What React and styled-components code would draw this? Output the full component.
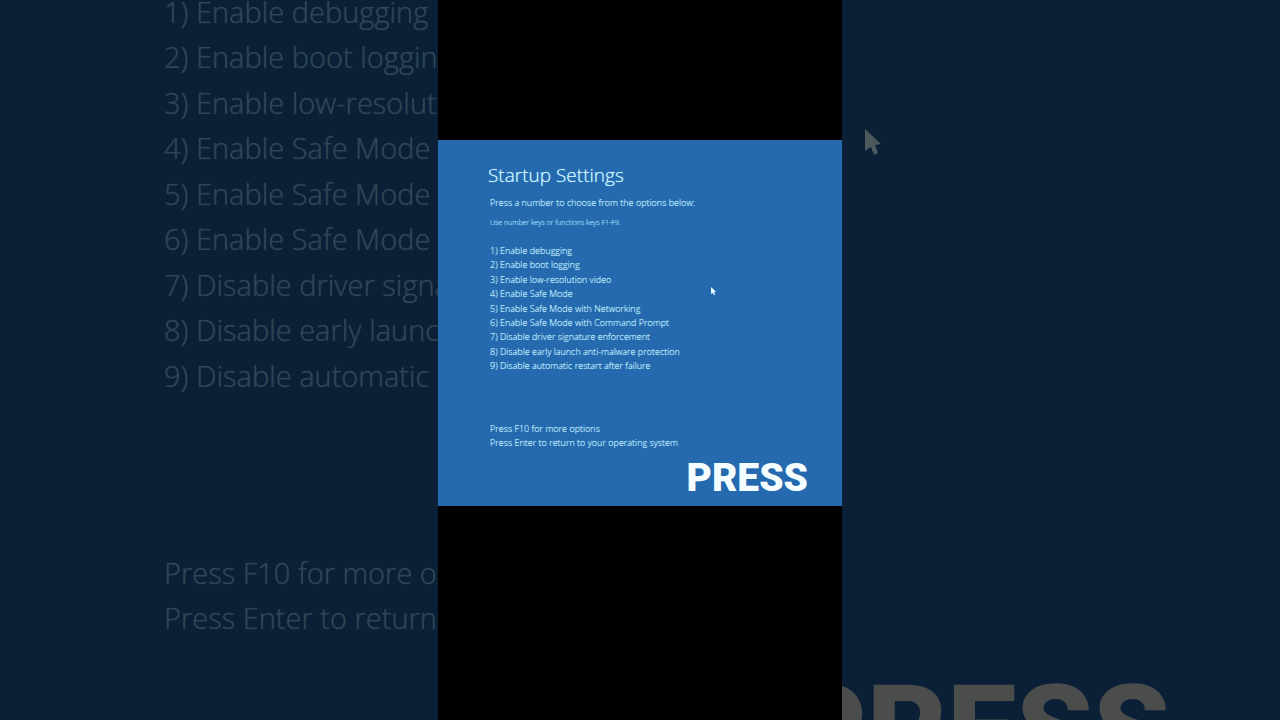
import React from 'react';
import styled, { createGlobalStyle } from "styled-components";

const options = [
  "Enable debugging",
  "Enable boot logging",
  "Enable low-resolution video",
  "Enable Safe Mode",
  "Enable Safe Mode with Networking",
  "Enable Safe Mode with Command Prompt",
  "Disable driver signature enforcement",
  "Disable early launch anti-malware protection",
  "Disable automatic restart after failure",
];

const hints = [
  "Press F10 for more options",
  "Press Enter to return to your operating system",
];

const GlobalStyle = createGlobalStyle`
  * {
    box-sizing: border-box;
  }
  body {
    margin: 0;
    background: #000;
    font-family: "Open Sans", "Noto Sans", sans-serif;
    font-weight: 300;
  }
`;

const Stage = styled.main`
  display: grid;
  grid-template-columns: 1fr auto 1fr;
  height: 100vh;
  overflow: hidden;
`;

const Side = styled.div`
  position: relative;
  display: flex;
  flex-direction: column;
  min-width: 0;
  overflow: hidden;
  background: #0b2036;
  color: #2d4555;
  text-shadow: 0 0 1px #2d4555;
`;

const LeftSide = styled(Side)`
  padding-left: 164px;
`;

const RightSide = styled(Side)`
  justify-content: flex-end;
  align-items: flex-end;
  padding-right: 110px;
`;

const Phone = styled.div`
  height: 100vh;
  aspect-ratio: 101 / 180;
  padding-top: 140px;
  background: #000;
`;

const Screen = styled.section`
  position: relative;
  display: flex;
  flex-direction: column;
  padding: 20px 34px 8px 52px;
  background: #2569ae;
  color: #d0f8ff;
  text-shadow: 0 0 1px #8fd0f4;
`;

const Title = styled.h1`
  margin: 0 0 0 -2px;
  font-size: 19px;
  font-weight: 300;
  line-height: 30px;
  color: #d4faff;
`;

const Lead = styled.p`
  margin: 6px 0 0;
  font-size: 9px;
  line-height: 14px;
`;

const Note = styled.p`
  margin: 7px 0 0;
  font-size: 7px;
  line-height: 12px;
  color: #a8e0fa;
`;

const Lines = styled.ul`
  margin: ${props => props.$top}px 0 0;
  padding: 0;
  list-style: none;
  white-space: nowrap;
  font-size: ${props => props.$large ? 29 : 9}px;
  line-height: ${props => props.$large ? 1.567 : 1.6};
`;

const Caption = styled.strong`
  align-self: flex-end;
  font-family: Roboto, sans-serif;
  font-weight: 900;
  font-size: ${props => props.$large ? 123 : 39}px;
  line-height: 1;
  color: ${props => props.$large ? "#4b4d4c" : "#f4fdff"};
  text-shadow: none;
`;

const SmallCaption = styled(Caption)`
  margin-top: 9px;
`;

const LargeCaption = styled(Caption)`
  margin-bottom: -72px;
`;

// the mouse pointer floats over whatever is beneath it
const Pointer = styled.svg`
  position: absolute;
  left: ${props => props.$x}px;
  top: ${props => props.$y}px;
  width: ${props => props.$size}px;
  height: auto;
`;

const Cursor = ({ x, y, size, color }) => (
  <Pointer $x={x} $y={y} $size={size} viewBox="0 0 16 26" aria-hidden="true">
    <path d="M0 0 L16 15 L10 16 L13 24 L9 26 L6 18 L0 22 Z" fill={color} />
  </Pointer>
);

const OptionLines = props => (
  <Lines {...props}>
    {options.map((option, i) => (
      <li key={option}>{i + 1}) {option}</li>
    ))}
  </Lines>
);

const HintLines = props => (
  <Lines {...props}>
    {hints.map(hint => <li key={hint}>{hint}</li>)}
  </Lines>
);

const App = () => {
  return (
    <Stage>
      <GlobalStyle />
      <LeftSide aria-hidden="true">
        <OptionLines $large $top={-11} />
        <HintLines $large $top={152} />
      </LeftSide>
      <Phone>
        <Screen>
          <Title>Startup Settings</Title>
          <Lead>Press a number to choose from the options below:</Lead>
          <Note>Use number keys or functions keys F1-F9.</Note>
          <OptionLines $top={15} />
          <HintLines $top={48} />
          <SmallCaption>PRESS</SmallCaption>
          <Cursor x={273} y={147} size={5} color="#e4faff" />
        </Screen>
      </Phone>
      <RightSide aria-hidden="true">
        <Cursor x={23} y={129} size={16} color="#4c5a5c" />
        <LargeCaption $large>PRESS</LargeCaption>
      </RightSide>
    </Stage>
  )
}

export default App;
